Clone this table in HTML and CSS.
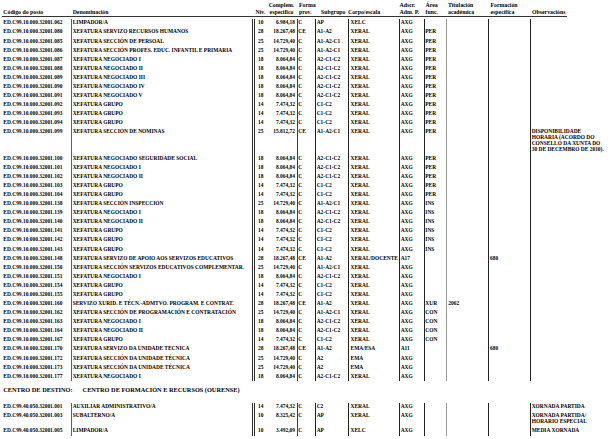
FILE: index.html
```html
<!DOCTYPE html>
<html lang="gl">
<head>
<meta charset="utf-8">
<title>RPT</title>
<link rel="stylesheet" href="styles.css">
</head>
<body>
<div class="page">
  <div class="head">
    <div class="h h-code">Código do posto</div>
    <div class="h h-den">Denominación</div>
    <div class="h h-niv">Niv.</div>
    <div class="h h-comp">Complem.<br>específico</div>
    <div class="h h-forma">Forma<br>prov.</div>
    <div class="h h-sub">Subgrupo</div>
    <div class="h h-corpo">Corpo/escala</div>
    <div class="h h-adscr">Adscr.<br>Adm. P.</div>
    <div class="h h-area">Área<br>func.</div>
    <div class="h h-tit">Titulación<br>académica</div>
    <div class="h h-form">Formación<br>específica</div>
    <div class="h h-obs">Observacións</div>
  </div>

  <table class="rpt rpt-first">
    <colgroup>
      <col class="c-code"><col class="c-den"><col class="c-niv"><col class="c-comp"><col class="c-forma"><col class="c-sub"><col class="c-corpo"><col class="c-adscr"><col class="c-area"><col class="c-tit"><col class="c-form"><col class="c-obs">
    </colgroup>
    <tbody>
      <tr><td>ED.C99.10.000.32001.062</td><td>LIMPADOR/A</td><td>10</td><td>6.984,18</td><td>C</td><td>AP</td><td>XELC</td><td>AXG</td><td></td><td></td><td></td><td></td></tr>
      <tr><td>ED.C99.10.000.32001.080</td><td>XEFATURA SERVIZO RECURSOS HUMANOS</td><td>28</td><td>18.267,48</td><td>CE</td><td>A1-A2</td><td>XERAL</td><td>AXG</td><td>PER</td><td></td><td></td><td></td></tr>
      <tr><td>ED.C99.10.000.32001.085</td><td>XEFATURA SECCIÓN DE PERSOAL</td><td>25</td><td>14.729,40</td><td>C</td><td>A1-A2-C1</td><td>XERAL</td><td>AXG</td><td>PER</td><td></td><td></td><td></td></tr>
      <tr><td>ED.C99.10.000.32001.086</td><td>XEFATURA SECCIÓN PROFES. EDUC. INFANTIL E PRIMARIA</td><td>25</td><td>14.729,40</td><td>C</td><td>A1-A2-C1</td><td>XERAL</td><td>AXG</td><td>PER</td><td></td><td></td><td></td></tr>
      <tr><td>ED.C99.10.000.32001.087</td><td>XEFATURA NEGOCIADO I</td><td>18</td><td>8.064,84</td><td>C</td><td>A2-C1-C2</td><td>XERAL</td><td>AXG</td><td>PER</td><td></td><td></td><td></td></tr>
      <tr><td>ED.C99.10.000.32001.088</td><td>XEFATURA NEGOCIADO II</td><td>18</td><td>8.064,84</td><td>C</td><td>A2-C1-C2</td><td>XERAL</td><td>AXG</td><td>PER</td><td></td><td></td><td></td></tr>
      <tr><td>ED.C99.10.000.32001.089</td><td>XEFATURA NEGOCIADO III</td><td>18</td><td>8.064,84</td><td>C</td><td>A2-C1-C2</td><td>XERAL</td><td>AXG</td><td>PER</td><td></td><td></td><td></td></tr>
      <tr><td>ED.C99.10.000.32001.090</td><td>XEFATURA NEGOCIADO IV</td><td>18</td><td>8.064,84</td><td>C</td><td>A2-C1-C2</td><td>XERAL</td><td>AXG</td><td>PER</td><td></td><td></td><td></td></tr>
      <tr><td>ED.C99.10.000.32001.091</td><td>XEFATURA NEGOCIADO V</td><td>18</td><td>8.064,84</td><td>C</td><td>A2-C1-C2</td><td>XERAL</td><td>AXG</td><td>PER</td><td></td><td></td><td></td></tr>
      <tr><td>ED.C99.10.000.32001.092</td><td>XEFATURA GRUPO</td><td>14</td><td>7.474,32</td><td>C</td><td>C1-C2</td><td>XERAL</td><td>AXG</td><td>PER</td><td></td><td></td><td></td></tr>
      <tr><td>ED.C99.10.000.32001.093</td><td>XEFATURA GRUPO</td><td>14</td><td>7.474,32</td><td>C</td><td>C1-C2</td><td>XERAL</td><td>AXG</td><td>PER</td><td></td><td></td><td></td></tr>
      <tr><td>ED.C99.10.000.32001.094</td><td>XEFATURA GRUPO</td><td>14</td><td>7.474,32</td><td>C</td><td>C1-C2</td><td>XERAL</td><td>AXG</td><td>PER</td><td></td><td></td><td></td></tr>
      <tr><td>ED.C99.10.000.32001.099</td><td>XEFATURA SECCIÓN DE NOMINAS</td><td>25</td><td>15.812,72</td><td>CE</td><td>A1-A2-C1</td><td>XERAL</td><td>AXG</td><td>PER</td><td></td><td></td><td>DISPONIBILIDADE<br>HORARIA (ACORDO DO<br>CONSELLO DA XUNTA DO<br>30 DE DECEMBRO DE 2010).</td></tr>
      <tr><td>ED.C99.10.000.32001.100</td><td>XEFATURA NEGOCIADO SEGURIDADE SOCIAL</td><td>18</td><td>8.064,84</td><td>C</td><td>A2-C1-C2</td><td>XERAL</td><td>AXG</td><td>PER</td><td></td><td></td><td></td></tr>
      <tr><td>ED.C99.10.000.32001.101</td><td>XEFATURA NEGOCIADO I</td><td>18</td><td>8.064,84</td><td>C</td><td>A2-C1-C2</td><td>XERAL</td><td>AXG</td><td>PER</td><td></td><td></td><td></td></tr>
      <tr><td>ED.C99.10.000.32001.102</td><td>XEFATURA NEGOCIADO II</td><td>18</td><td>8.064,84</td><td>C</td><td>A2-C1-C2</td><td>XERAL</td><td>AXG</td><td>PER</td><td></td><td></td><td></td></tr>
      <tr><td>ED.C99.10.000.32001.103</td><td>XEFATURA GRUPO</td><td>14</td><td>7.474,32</td><td>C</td><td>C1-C2</td><td>XERAL</td><td>AXG</td><td>PER</td><td></td><td></td><td></td></tr>
      <tr><td>ED.C99.10.000.32001.104</td><td>XEFATURA GRUPO</td><td>14</td><td>7.474,32</td><td>C</td><td>C1-C2</td><td>XERAL</td><td>AXG</td><td>PER</td><td></td><td></td><td></td></tr>
      <tr><td>ED.C99.10.000.32001.138</td><td>XEFATURA SECCIÓN INSPECCIÓN</td><td>25</td><td>14.729,40</td><td>C</td><td>A1-A2-C1</td><td>XERAL</td><td>AXG</td><td>INS</td><td></td><td></td><td></td></tr>
      <tr><td>ED.C99.10.000.32001.139</td><td>XEFATURA NEGOCIADO I</td><td>18</td><td>8.064,84</td><td>C</td><td>A2-C1-C2</td><td>XERAL</td><td>AXG</td><td>INS</td><td></td><td></td><td></td></tr>
      <tr><td>ED.C99.10.000.32001.140</td><td>XEFATURA NEGOCIADO II</td><td>18</td><td>8.064,84</td><td>C</td><td>A2-C1-C2</td><td>XERAL</td><td>AXG</td><td>INS</td><td></td><td></td><td></td></tr>
      <tr><td>ED.C99.10.000.32001.141</td><td>XEFATURA GRUPO</td><td>14</td><td>7.474,32</td><td>C</td><td>C1-C2</td><td>XERAL</td><td>AXG</td><td>INS</td><td></td><td></td><td></td></tr>
      <tr><td>ED.C99.10.000.32001.142</td><td>XEFATURA GRUPO</td><td>14</td><td>7.474,32</td><td>C</td><td>C1-C2</td><td>XERAL</td><td>AXG</td><td>INS</td><td></td><td></td><td></td></tr>
      <tr><td>ED.C99.10.000.32001.143</td><td>XEFATURA GRUPO</td><td>14</td><td>7.474,32</td><td>C</td><td>C1-C2</td><td>XERAL</td><td>AXG</td><td>INS</td><td></td><td></td><td></td></tr>
      <tr><td>ED.C99.10.000.32001.148</td><td>XEFATURA SERVIZO DE APOIO AOS SERVIZOS EDUCATIVOS</td><td>28</td><td>18.267,48</td><td>CE</td><td>A1-A2</td><td>XERAL/DOCENTE</td><td>A17</td><td></td><td></td><td>680</td><td></td></tr>
      <tr><td>ED.C99.10.000.32001.150</td><td>XEFATURA SECCIÓN SERVIZOS EDUCATIVOS COMPLEMENTAR.</td><td>25</td><td>14.729,40</td><td>C</td><td>A1-A2-C1</td><td>XERAL</td><td>AXG</td><td></td><td></td><td></td><td></td></tr>
      <tr><td>ED.C99.10.000.32001.151</td><td>XEFATURA NEGOCIADO I</td><td>18</td><td>8.064,84</td><td>C</td><td>A2-C1-C2</td><td>XERAL</td><td>AXG</td><td></td><td></td><td></td><td></td></tr>
      <tr><td>ED.C99.10.000.32001.154</td><td>XEFATURA GRUPO</td><td>14</td><td>7.474,32</td><td>C</td><td>C1-C2</td><td>XERAL</td><td>AXG</td><td></td><td></td><td></td><td></td></tr>
      <tr><td>ED.C99.10.000.32001.155</td><td>XEFATURA GRUPO</td><td>14</td><td>7.474,32</td><td>C</td><td>C1-C2</td><td>XERAL</td><td>AXG</td><td></td><td></td><td></td><td></td></tr>
      <tr><td>ED.C99.10.000.32001.160</td><td>SERVIZO XURID. E TÉCN.-ADMTVO. PROGRAM. E CONTRAT.</td><td>28</td><td>18.267,48</td><td>CE</td><td>A1-A2</td><td>XERAL</td><td>AXG</td><td>XUR</td><td>2062</td><td></td><td></td></tr>
      <tr><td>ED.C99.10.000.32001.162</td><td>XEFATURA SECCIÓN DE PROGRAMACIÓN E CONTRATACIÓN</td><td>25</td><td>14.729,40</td><td>C</td><td>A1-A2-C1</td><td>XERAL</td><td>AXG</td><td>CON</td><td></td><td></td><td></td></tr>
      <tr><td>ED.C99.10.000.32001.163</td><td>XEFATURA NEGOCIADO I</td><td>18</td><td>8.064,84</td><td>C</td><td>A2-C1-C2</td><td>XERAL</td><td>AXG</td><td>CON</td><td></td><td></td><td></td></tr>
      <tr><td>ED.C99.10.000.32001.164</td><td>XEFATURA NEGOCIADO II</td><td>18</td><td>8.064,84</td><td>C</td><td>A2-C1-C2</td><td>XERAL</td><td>AXG</td><td>CON</td><td></td><td></td><td></td></tr>
      <tr><td>ED.C99.10.000.32001.167</td><td>XEFATURA GRUPO</td><td>14</td><td>7.474,32</td><td>C</td><td>C1-C2</td><td>XERAL</td><td>AXG</td><td>CON</td><td></td><td></td><td></td></tr>
      <tr><td>ED.C99.10.000.32001.170</td><td>XEFATURA SERVIZO DA UNIDADE TÉCNICA</td><td>28</td><td>18.267,48</td><td>CE</td><td>A1-A2</td><td>EMA/ESA</td><td>A11</td><td></td><td></td><td>680</td><td></td></tr>
      <tr><td>ED.C99.10.000.32001.172</td><td>XEFATURA SECCIÓN DA UNIDADE TÉCNICA</td><td>25</td><td>14.729,40</td><td>C</td><td>A2</td><td>EMA</td><td>AXG</td><td></td><td></td><td></td><td></td></tr>
      <tr><td>ED.C99.10.000.32001.173</td><td>XEFATURA SECCIÓN DA UNIDADE TÉCNICA</td><td>25</td><td>14.729,40</td><td>C</td><td>A2</td><td>EMA</td><td>AXG</td><td></td><td></td><td></td><td></td></tr>
      <tr><td>ED.C99.10.000.32001.177</td><td>XEFATURA NEGOCIADO I</td><td>18</td><td>8.064,84</td><td>C</td><td>A2-C1-C2</td><td>XERAL</td><td>AXG</td><td></td><td></td><td></td><td></td></tr>
    </tbody>
  </table>

  <div class="centro">CENTRO DE DESTINO:<span class="centro-name">CENTRO DE FORMACIÓN E RECURSOS (OURENSE)</span></div>

  <table class="rpt">
    <colgroup>
      <col class="c-code"><col class="c-den"><col class="c-niv"><col class="c-comp"><col class="c-forma"><col class="c-sub"><col class="c-corpo"><col class="c-adscr"><col class="c-area"><col class="c-tit"><col class="c-form"><col class="c-obs">
    </colgroup>
    <tbody>
      <tr><td>ED.C99.40.050.32001.001</td><td>AUXILIAR ADMINISTRATIVO/A</td><td>14</td><td>7.474,32</td><td>C</td><td>C2</td><td>XERAL</td><td>AXG</td><td></td><td></td><td></td><td>XORNADA PARTIDA</td></tr>
      <tr><td>ED.C99.40.050.32001.003</td><td>SUBALTERNO/A</td><td>10</td><td>8.325,42</td><td>C</td><td>AP</td><td>XERAL</td><td>AXG</td><td></td><td></td><td></td><td>XORNADA PARTIDA/<br>HORARIO ESPECIAL</td></tr>
      <tr><td>ED.C99.40.050.32001.005</td><td>LIMPADOR/A</td><td>10</td><td>3.492,09</td><td>C</td><td>AP</td><td>XELC</td><td>AXG</td><td></td><td></td><td></td><td>MEDIA XORNADA</td></tr>
    </tbody>
  </table>
</div>
</body>
</html>
```

FILE: styles.css
```css
* { box-sizing: border-box; }

body {
  margin: 0;
  background: #ffffff;
  color: #000000;
  font-family: "Liberation Serif", "Times New Roman", serif;
}

.page {
  width: 615px;
  height: 439px;
  overflow: hidden;
}

/* ---------- header ---------- */
.head {
  display: flex;
  align-items: flex-end;
  margin-left: 2px;
  width: 565px;
  height: 17.2px;
  padding-top: 1.4px;
  border-bottom: 1.4px solid #333333;
  font-size: 5.8px;
  line-height: 7.2px;
  font-weight: bold;
}

.h { flex: none; white-space: nowrap; }
.h-code  { width: 69px;  padding-left: 1.3px; }
.h-den   { width: 177px; padding-left: 1.7px; }
.h-niv   { width: 14px;  padding-left: 7.5px; }
.h-comp  { width: 35px;  text-align: center; padding-left: 4px; }
.h-forma { width: 21px;  padding-left: 2px; }
.h-sub   { width: 28px;  padding-left: 3px; }
.h-corpo { width: 52px;  padding-left: 2px; }
.h-adscr { width: 26px;  padding-left: 1.5px; }
.h-area  { width: 22px;  padding-left: 1.5px; }
.h-tit   { width: 42px;  padding-left: 2px; }
.h-form  { width: 42px;  padding-left: 2.5px; }
.h-obs   { width: 37px;  padding-left: 2px; }

/* ---------- tables ---------- */
.rpt {
  border-collapse: collapse;
  table-layout: fixed;
  width: 615px;
  font-size: 5.45px;
  line-height: 5.8px;
  font-weight: bold;
}

.rpt-first { margin-top: 1.55px; }

.rpt td {
  padding: 1.65px 0 1.65px 1.2px;
  vertical-align: top;
  white-space: nowrap;
  overflow: hidden;
}

/* column rules */
.rpt td:nth-child(2)  { border-left: 1px solid #5e5e5e; }
.rpt td:nth-child(3)  { border-left: 3px double #2e2e2e; padding-left: 3.5px; }
.rpt td:nth-child(5)  { border-left: 1px solid #3c3c3c; padding-left: 0.8px; }
.rpt td:nth-child(6)  { border-left: 1px solid #222222; }
.rpt td:nth-child(7)  { border-left: 1px solid #222222; padding-left: 2px; }
.rpt td:nth-child(8)  { border-left: 1px solid #222222; }
.rpt td:nth-child(9)  { border-left: 1px solid #222222; padding-left: 0.8px; }
.rpt td:nth-child(10) { border-left: 1px solid #999999; padding-left: 1.8px; }
.rpt td:nth-child(11) { border-left: 1px solid #222222; padding-left: 1.5px; }
.rpt td:nth-child(12) { border-left: 1px solid #222222; }

.rpt td:nth-child(1) { padding-left: 3.3px; }
.rpt td:nth-child(4) { text-align: right; padding-left: 0; padding-right: 1.5px; }

.c-code  { width: 71px; }
.c-den   { width: 182px; }
.c-niv   { width: 12px; }
.c-comp  { width: 32px; }
.c-forma { width: 18px; }
.c-sub   { width: 33px; }
.c-corpo { width: 51px; }
.c-adscr { width: 25px; }
.c-area  { width: 22px; }
.c-tit   { width: 42px; }
.c-form  { width: 42px; }
.c-obs   { width: 85px; }

/* ---------- centre heading ---------- */
.centro {
  padding: 5.05px 0 0 3.3px;
  margin-bottom: 8.45px;
  font-size: 6.3px;
  line-height: 8px;
  font-weight: bold;
  white-space: nowrap;
}

.centro-name { margin-left: 10px; }
```
